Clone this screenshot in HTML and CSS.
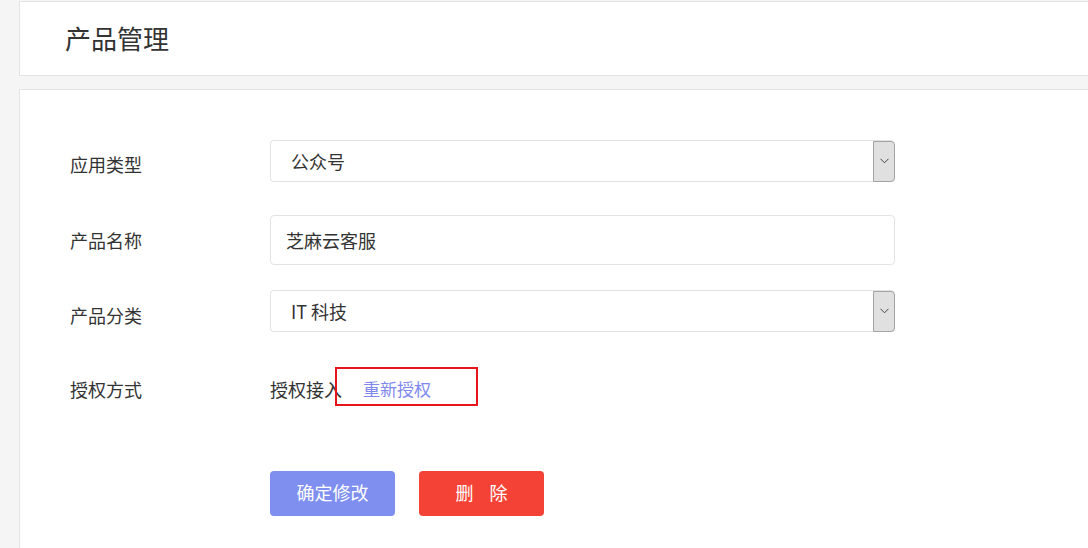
FILE: index.html
```html
<!doctype html>
<html lang="zh-cn">
	<head>
		<meta charset="utf-8">
		<title>产品管理</title>
		<link rel="stylesheet" href="styles.css">
	</head>
	<body>
		<div class="page">
			<div class="card header">
				<h1 class="title">产品管理</h1>
			</div>

			<div class="card body">
				<div class="row row-select">
					<div class="label">应用类型</div>
					<div class="select">
						<span class="select-text">公众号</span>
						<span class="select-arrow">
							<svg width="9" height="6" viewBox="0 0 9 6"><path d="M0.5 0.8 L4.5 4.8 L8.5 0.8" fill="none" stroke="#444" stroke-width="1"/></svg>
						</span>
					</div>
				</div>

				<div class="row row-input">
					<div class="label">产品名称</div>
					<div class="input">芝麻云客服</div>
				</div>

				<div class="row row-select row-third">
					<div class="label">产品分类</div>
					<div class="select">
						<span class="select-text">IT 科技</span>
						<span class="select-arrow">
							<svg width="9" height="6" viewBox="0 0 9 6"><path d="M0.5 0.8 L4.5 4.8 L8.5 0.8" fill="none" stroke="#444" stroke-width="1"/></svg>
						</span>
					</div>
				</div>

				<div class="row row-auth">
					<div class="label">授权方式</div>
					<div class="auth">
						<span class="auth-text">授权接入</span>
						<a class="auth-link" href="#">重新授权</a>
					</div>
				</div>

				<div class="actions">
					<button class="btn btn-primary">确定修改</button>
					<button class="btn btn-danger">删&nbsp;&nbsp;&nbsp;&nbsp;除</button>
				</div>
			</div>
		</div>
	</body>
</html>
```

FILE: styles.css
```css
body {
	margin: 0;
	background: #f5f5f5;
	font-family: "Noto Sans CJK SC", "Liberation Sans", sans-serif;
	color: #333;
	overflow: hidden;
	height: 548px;
}

.page {
	padding: 1px 0 0 19px;
}

.card {
	background: #fff;
	border: 1px solid #e3e3e3;
	border-right: none;
}

.header {
	height: 73px;
	display: flex;
	align-items: center;
	padding-left: 45px;
}

.title {
	margin: 0;
	font-size: 26px;
	font-weight: normal;
	color: #333;
	line-height: 1;
	position: relative;
	top: -1px;
}

.body {
	margin-top: 13px;
	padding: 50px 0 0 50px;
	height: 420px;
}

.row {
	display: flex;
	align-items: center;
}

.label {
	width: 200px;
	font-size: 18px;
	line-height: 1;
	flex: none;
}

.row-select {
	height: 42px;
	margin-bottom: 33px;
}
.row-select .label { padding-top: 5px; }

.row-third { margin-bottom: 35px; }
.row-third .label { padding-top: 7px; }

.row-input {
	height: 50px;
	margin-bottom: 25px;
}

.row-auth {
	height: 39px;
}
.row-auth .label { padding-top: 4px; }

.select {
	width: 625px;
	height: 42px;
	box-sizing: border-box;
	border: 1px solid #e3e3e3;
	border-right: none;
	border-radius: 4px;
	display: flex;
	align-items: center;
	justify-content: space-between;
	padding-left: 20px;
}

.select-text {
	font-size: 18px;
	line-height: 1;
}

.select-arrow {
	width: 22px;
	height: 41px;
	box-sizing: border-box;
	background: #e0e0e0;
	border: 1px solid #a3a3a3;
	border-radius: 0 4px 4px 0;
	display: flex;
	align-items: center;
	justify-content: center;
}

.input {
	width: 625px;
	height: 50px;
	box-sizing: border-box;
	border: 1px solid #e3e3e3;
	border-radius: 4px;
	padding-left: 15px;
	font-size: 18px;
	display: flex;
	align-items: center;
}

.auth {
	display: flex;
	align-items: center;
	font-size: 18px;
	line-height: 1;
}

.auth-text {
	padding-top: 4px;
}

.auth-link {
	margin-left: -7px;
	width: 143px;
	height: 39px;
	box-sizing: border-box;
	border: 2px solid #e8141c;
	padding: 4px 0 0 26px;
	display: flex;
	align-items: center;
	color: #8088f0;
	text-decoration: none;
	font-size: 17px;
}

.actions {
	display: flex;
	gap: 24px;
	margin: 65px 0 0 200px;
}

.btn {
	width: 125px;
	height: 45px;
	border: none;
	border-radius: 4px;
	color: #fff;
	font-family: inherit;
	font-size: 18px;
	padding: 0 0 3px;
}

.btn-primary { background: #7e8fef; }
.btn-danger { background: #f44336; }
```
